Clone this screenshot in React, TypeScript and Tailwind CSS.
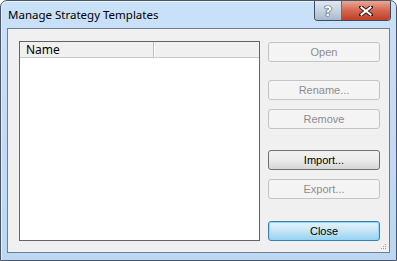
import React from 'react';

const btnFont = { fontFamily: '"Liberation Sans", Arial, sans-serif' };

const DialogButton: React.FC<{ label: string; state: 'disabled' | 'normal' | 'default'; className?: string }> = ({
  label,
  state,
  className = '',
}) => {
  const look =
    state === 'disabled'
      ? 'border-[#c2c4c6] bg-[#f4f4f4] text-[#8d8d8d]'
      : state === 'normal'
      ? 'border-[#707070] bg-gradient-to-b from-[#f2f2f2] via-[#ebebeb] to-[#d6d6d6] text-black'
      : 'border-[#3c7fb1] bg-gradient-to-b from-[#e5f4fc] via-[#c4e5f6] to-[#98d1ef] text-black shadow-[inset_0_0_0_1px_#8fd6f8]';
  return (
    <div
      className={`w-[112px] h-[20px] rounded-[3px] border flex items-center justify-center text-[11px] leading-none ${look} ${className}`}
      style={btnFont}
    >
      {label}
    </div>
  );
};

const TitleButtons: React.FC = () => (
  <div className="absolute top-0 right-[5px] flex h-[20px] rounded-b-[4px] border border-t-0 border-[#3d4d63] overflow-hidden">
    <div className="w-[27px] h-full flex items-center justify-center bg-gradient-to-b from-[#dfe7f0] via-[#c7d3e1] to-[#a8b8cb] border-r border-[#5c6f87]">
      <span
        className="text-[14px] font-bold text-white leading-none"
        style={{ fontFamily: '"DejaVu Sans", sans-serif', textShadow: '0 0 1px #2b3a4d, 0 0 1px #2b3a4d, 0 0 1px #2b3a4d' }}
      >
        ?
      </span>
    </div>
    <div className="w-[48px] h-full flex items-center justify-center bg-gradient-to-b from-[#e7a898] via-[#d4664f] to-[#c23c24]">
      <svg width="14" height="10" viewBox="0 0 14 10">
        <path d="M2 1 L12 9 M12 1 L2 9" stroke="#3b1a14" strokeWidth="4" strokeLinecap="square" />
        <path d="M2.5 1.5 L11.5 8.5 M11.5 1.5 L2.5 8.5" stroke="#ffffff" strokeWidth="2" strokeLinecap="square" />
      </svg>
    </div>
  </div>
);

const App: React.FC = () => {
  return (
    <div className="w-[397px] h-[261px] bg-white">
      <div className="relative w-full h-full border border-[#4b5563] rounded-t-[7px] bg-gradient-to-b from-[#c9e1f8] to-[#bbd7f4] flex flex-col overflow-hidden shadow-[inset_0_1px_0_#e8f3fd,inset_1px_0_0_#e0eefb]">
        <div className="h-[27px] flex items-center pl-[7px] pt-[1px] text-[11.5px] text-black" style={{ fontFamily: '"Noto Sans", sans-serif' }}>
          Manage Strategy Templates
        </div>
        <TitleButtons />
        <div className="mx-[6px] flex-1 border border-[#6f7f93] bg-[#f0f0f0] flex relative">
          <div className="ml-[11px] mt-[12px] w-[241px] h-[200px] border border-[#646464] bg-white flex flex-col">
            <div className="h-[16px] flex border-b border-[#c9c9c9] bg-[#f0f0f0]">
              <div
                className="w-[134px] border-r border-[#bdbdbd] pl-[6px] text-[12px] leading-[15px] text-black"
                style={{ fontFamily: '"Noto Sans", sans-serif' }}
              >
                Name
              </div>
              <div className="flex-1 border-l border-white" />
            </div>
            <div className="flex-1" />
          </div>
          <div className="ml-[8px] mt-[13px] flex flex-col">
            <DialogButton label="Open" state="disabled" />
            <DialogButton label="Rename..." state="disabled" className="mt-[18px]" />
            <DialogButton label="Remove" state="disabled" className="mt-[9px]" />
            <DialogButton label="Import..." state="normal" className="mt-[21px]" />
            <DialogButton label="Export..." state="disabled" className="mt-[9px]" />
            <DialogButton label="Close" state="default" className="mt-[22px]" />
          </div>
          <div className="absolute right-[3px] bottom-[3px] grid grid-cols-3 gap-[1px]">
            {[0, 0, 1, 0, 1, 1, 1, 1, 1].map((v, i) => (
              <div key={i} className={`w-[1px] h-[1px] ${v ? 'bg-[#a0a0a0]' : ''}`} />
            ))}
          </div>
        </div>
        <div className="h-[7px]" />
      </div>
    </div>
  );
};

export default App;
